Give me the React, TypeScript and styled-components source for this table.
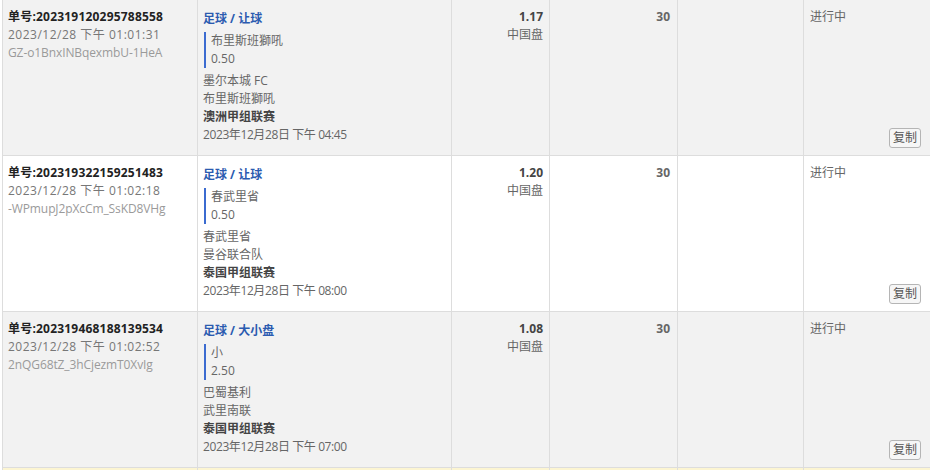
import styled, { createGlobalStyle } from "styled-components"

interface Bet {
    id: string
    time: string
    code: string
    market: string
    pick: string
    line: string
    home: string
    away: string
    league: string
    kickoff: string
    odds: string
    oddsType: string
    stake: string
    status: string
}

const bets: Bet[] = [
    {
        id: "202319120295788558",
        time: "2023/12/28 下午 01:01:31",
        code: "GZ-o1BnxINBqexmbU-1HeA",
        market: "足球 / 让球",
        pick: "布里斯班獅吼",
        line: "0.50",
        home: "墨尔本城 FC",
        away: "布里斯班獅吼",
        league: "澳洲甲组联赛",
        kickoff: "2023年12月28日 下午 04:45",
        odds: "1.17",
        oddsType: "中国盘",
        stake: "30",
        status: "进行中",
    },
    {
        id: "202319322159251483",
        time: "2023/12/28 下午 01:02:18",
        code: "-WPmupJ2pXcCm_SsKD8VHg",
        market: "足球 / 让球",
        pick: "春武里省",
        line: "0.50",
        home: "春武里省",
        away: "曼谷联合队",
        league: "泰国甲组联赛",
        kickoff: "2023年12月28日 下午 08:00",
        odds: "1.20",
        oddsType: "中国盘",
        stake: "30",
        status: "进行中",
    },
    {
        id: "202319468188139534",
        time: "2023/12/28 下午 01:02:52",
        code: "2nQG68tZ_3hCjezmT0XvIg",
        market: "足球 / 大小盘",
        pick: "小",
        line: "2.50",
        home: "巴蜀基利",
        away: "武里南联",
        league: "泰国甲组联赛",
        kickoff: "2023年12月28日 下午 07:00",
        odds: "1.08",
        oddsType: "中国盘",
        stake: "30",
        status: "进行中",
    },
]

function App() {
    return (
        <>
            <GlobalStyle />
            <Table>
                {bets.map((bet, i) => (
                    <Row key={bet.id} $alt={i % 2 === 0}>
                        <Cell>
                            <OrderNo>单号:{bet.id}</OrderNo>
                            <Muted>{bet.time}</Muted>
                            <Code>{bet.code}</Code>
                        </Cell>
                        <Cell>
                            <Market>{bet.market}</Market>
                            <Pick>
                                <Line>{bet.pick}</Line>
                                <Line>{bet.line}</Line>
                            </Pick>
                            <Line>{bet.home}</Line>
                            <Line>{bet.away}</Line>
                            <League>{bet.league}</League>
                            <Kickoff>{bet.kickoff}</Kickoff>
                        </Cell>
                        <NumCell>
                            <Odds>{bet.odds}</Odds>
                            <Line>{bet.oddsType}</Line>
                        </NumCell>
                        <NumCell $pr={7}>
                            <Stake>{bet.stake}</Stake>
                        </NumCell>
                        <Cell />
                        <StatusCell>
                            <Line>{bet.status}</Line>
                            <CopyButton>复制</CopyButton>
                        </StatusCell>
                    </Row>
                ))}
                <Row $alt={false} $yellow>
                    <Cell />
                    <Cell />
                    <NumCell />
                    <NumCell />
                    <Cell />
                    <StatusCell />
                </Row>
            </Table>
        </>
    )
}

export default App

const GlobalStyle = createGlobalStyle`
    html, body {
        margin: 0;
        padding: 0;
        background: #ffffff;
        overflow: hidden;
    }
    body {
        font-family: "Open Sans", "Noto Sans CJK SC", sans-serif;
        font-size: 12px;
        color: #555;
    }
`

const Table = styled.div`
    margin-left: 2px;
    width: 928px;
    display: flex;
    flex-direction: column;
`

const Row = styled.div<{ $alt: boolean; $yellow?: boolean }>`
    display: grid;
    grid-template-columns: 195px 254px 98px 128px 126px 1fr;
    height: 156px;
    flex-shrink: 0;
    box-sizing: border-box;
    border-left: 1px solid #dddddd;
    border-bottom: 1px solid #dddddd;
    background: ${(p) => (p.$yellow ? "#fcf5d2" : p.$alt ? "#f2f2f2" : "#ffffff")};
`

const Cell = styled.div`
    box-sizing: border-box;
    border-right: 1px solid #dddddd;
    padding: 8px 6px 7px 5px;
    display: flex;
    flex-direction: column;
    line-height: 18px;
    min-width: 0;
    white-space: nowrap;
`

const NumCell = styled(Cell)<{ $pr?: number }>`
    align-items: flex-end;
    padding-right: ${(p) => p.$pr ?? 6}px;
`

const StatusCell = styled(Cell)`
    border-right: none;
    padding: 8px 9px 7px 6px;
    justify-content: space-between;
    align-items: flex-start;
`

const Line = styled.div`
    color: #666;
`

const Kickoff = styled(Line)`
    letter-spacing: -0.4px;
`

const OrderNo = styled.div`
    font-weight: bold;
    color: #222;
    letter-spacing: 0.2px;
`

const Muted = styled.div`
    color: #777;
    letter-spacing: 0.5px;
`

const Code = styled.div`
    color: #9a9a9a;
    letter-spacing: -0.1px;
`

const Market = styled.div`
    margin-top: 2px;
    font-weight: bold;
    color: #2b5bb0;
`

const Pick = styled.div`
    margin: 4px 0 4px 1px;
    padding-left: 5px;
    border-left: 2px solid #3b6bd0;
`

const League = styled.div`
    font-weight: bold;
    color: #444;
`

const Odds = styled.div`
    font-weight: bold;
    color: #444;
`

const Stake = styled.div`
    font-weight: bold;
    color: #666;
`

const CopyButton = styled.button`
    align-self: flex-end;
    height: 20px;
    padding: 0 3px;
    font-family: "Open Sans", "Noto Sans CJK SC", sans-serif;
    font-size: 12px;
    line-height: 18px;
    color: #555;
    background: #f6f6f6;
    border: 1px solid #b5b5b5;
    border-radius: 3px;
    cursor: pointer;
`
